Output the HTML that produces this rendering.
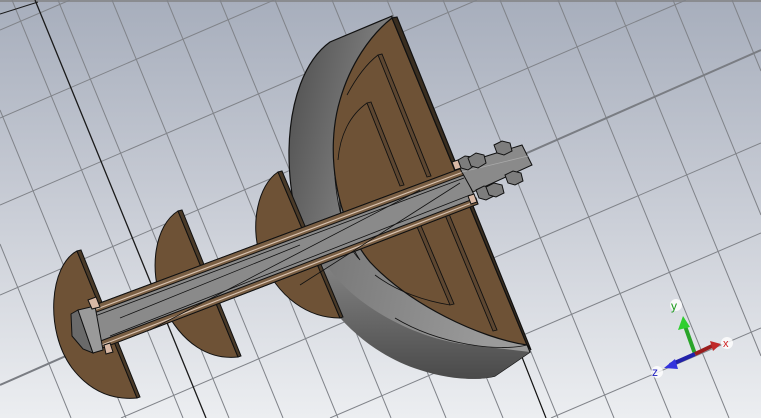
<!DOCTYPE html>
<html><head><meta charset="utf-8"><style>
html,body{margin:0;padding:0;width:761px;height:418px;overflow:hidden;position:relative;}
svg{display:block;position:absolute;left:0;top:0;overflow:hidden}
text{font-family:"Liberation Sans",sans-serif}
</style></head><body>
<svg width="761" height="418" viewBox="0 0 761 418" xmlns="http://www.w3.org/2000/svg">
<defs>
<linearGradient id="bg" x1="0" y1="0" x2="0" y2="1">
<stop offset="0" stop-color="#a7aebc"/><stop offset="0.5" stop-color="#c9cdd6"/><stop offset="1" stop-color="#eceef1"/>
</linearGradient>
<linearGradient id="ring" x1="0" y1="0" x2="1" y2="0.3">
<stop offset="0" stop-color="#4c4c4c"/><stop offset="0.35" stop-color="#7a7a7a"/><stop offset="1" stop-color="#9a9a9a"/>
</linearGradient>
<linearGradient id="ringb" x1="0" y1="0" x2="0" y2="1">
<stop offset="0" stop-color="#8a8a8a"/><stop offset="1" stop-color="#4a4a4a"/>
</linearGradient>
</defs>
<rect width="761" height="418" fill="url(#bg)"/>
<rect width="761" height="2" fill="#8a8c90"/>
<g stroke="#808389" stroke-width="1" fill="none">
<line x1="0" y1="244" x2="71" y2="418"/>
<line x1="0" y1="110" x2="126" y2="418"/>
<line x1="12" y1="0" x2="183" y2="418"/>
<line x1="58" y1="0" x2="229" y2="418"/>
<line x1="112" y1="0" x2="283" y2="418"/>
<line x1="167" y1="0" x2="338" y2="418"/>
<line x1="220" y1="0" x2="391" y2="418"/>
<line x1="275" y1="0" x2="446" y2="418"/>
<line x1="332" y1="0" x2="503" y2="418"/>
<line x1="387" y1="0" x2="558" y2="418"/>
<line x1="443" y1="0" x2="614" y2="418"/>
<line x1="500" y1="0" x2="671" y2="418"/>
<line x1="558" y1="0" x2="729" y2="418"/>
<line x1="615" y1="0" x2="761" y2="356"/>
<line x1="673" y1="0" x2="761" y2="215"/>
<line x1="732" y1="0" x2="761" y2="71"/>
<line x1="0" y1="30" x2="70" y2="0"/>
<line x1="0" y1="118" x2="274" y2="0"/>
<line x1="0" y1="205" x2="477" y2="0"/>
<line x1="0" y1="295" x2="686" y2="0"/>
<line x1="121" y1="418" x2="761" y2="143"/>
<line x1="330" y1="418" x2="761" y2="233"/>
<line x1="551" y1="418" x2="761" y2="328"/>
</g>
<line x1="0" y1="385" x2="761" y2="50" stroke="#7a7d83" stroke-width="2"/>
<line x1="35" y1="0" x2="206" y2="418" stroke="#1a1a1a" stroke-width="1.3"/>
<line x1="0" y1="14" x2="38" y2="2" stroke="#1a1a1a" stroke-width="1"/>
<line x1="520" y1="352" x2="546" y2="418" stroke="#111" stroke-width="1.2"/>

<g stroke="#111" stroke-width="1">
<path d="M77,251 C50,265 44,330 72,368 C92,394 115,400 137,398 Z" fill="#6e5236"/>
<path d="M77,251 L81,250 L140,397 L137,398 Z" fill="#4a3a28"/>
<path d="M178,211 C155,225 148,270 163,305 C182,345 210,360 238,357 Z" fill="#6e5236"/>
<path d="M178,211 L182,210 L241,356 L238,357 Z" fill="#4a3a28"/>
</g>

<g stroke="#111" stroke-width="1.2">
<path d="M392,16 L330,42 C305,60 290,100 289,150 C288,240 330,320 400,360 C430,375 470,382 495,376 L530,352 L392,18 Z" fill="url(#ring)"/>
<path d="M300,250 C320,310 370,355 420,370 C450,380 480,381 495,376 L530,352 L470,345 C420,340 360,310 330,270 Z" fill="url(#ringb)" stroke="none"/>
<path d="M392,18 C365,40 345,80 336,130 C330,180 340,230 360,260 C330,230 325,120 392,18 Z" fill="#8c8c8c" stroke-width="0.8"/>
<path d="M392,18 L527,345 C480,338 410,305 370,262 C335,220 325,150 340,100 C350,65 370,35 392,18 Z" fill="#6e5236"/>
<path d="M392,18 L397,17 L531,350 L527,345 Z" fill="#3a2e20"/>
<path d="M527,345 C500,352 440,345 395,318" fill="none" stroke-width="0.8"/>
</g>
<g stroke="#111" stroke-width="0.9" fill="#5d4630">
<path d="M378,55 L382,54 L431,176 L427,177 Z"/>
<path d="M367,103 L371,102 L404,185 L400,186 Z"/>
<path d="M443,210 L447,209 L497,330 L493,331 Z"/>
<path d="M415,222 L419,221 L454,304 L450,305 Z"/>
</g>
<path d="M367,103 C350,115 340,135 338,160" fill="none" stroke="#111" stroke-width="0.8"/>
<path d="M378,55 C365,65 355,80 347,95" fill="none" stroke="#111" stroke-width="0.8"/>
<path d="M450,305 C420,300 395,290 375,275" fill="none" stroke="#111" stroke-width="0.8"/>

<g stroke="#111" stroke-width="1">
<path d="M278,172 C258,185 250,225 260,255 C278,300 310,318 340,318 Z" fill="#6e5236"/>
<path d="M278,172 L282,171 L343,317 L340,318 Z" fill="#4a3a28"/>
</g>

<g stroke="#111" stroke-width="1">
<path d="M92,306 L462,168 L478,204 L100,349 Z" fill="#8a8a8a"/>
<path d="M92,306 L462,168 L464,175 L94,313 Z" fill="#7a5f44"/>
<path d="M94,310 L463,172" stroke="#d8c2b0" stroke-width="1.2"/>
<path d="M98,342 L476,198 L478,204 L100,349 Z" fill="#7a5f44"/>
<path d="M99,346 L477,201" stroke="#d8c2b0" stroke-width="1.2"/>
<path d="M95,316 L464,178 M110,336 L470,195" stroke-width="0.8"/>
<path d="M150,330 L420,190 M120,318 L300,245 M300,285 L460,183" stroke-width="0.8" fill="none"/>
</g>
<g stroke="#111" stroke-width="1">
<path d="M458,165 L522,145 L532,165 L473,192 Z" fill="#8a8a8a"/>
<path d="M462,172 L528,156" stroke="#aaa" stroke-width="0.8"/>
<path d="M458,160 L465,156 L472,157 L475,165 L468,170 L461,168 Z" fill="#7d7d7d"/>
<path d="M468,158 L476,153 L484,155 L486,163 L478,168 L471,166 Z" fill="#7d7d7d"/>
<path d="M494,145 L502,141 L510,143 L512,151 L504,155 L497,153 Z" fill="#7d7d7d"/>
<path d="M505,175 L513,171 L521,173 L523,181 L515,185 L508,183 Z" fill="#7d7d7d"/>
<path d="M476,190 L484,186 L492,188 L494,196 L486,200 L479,198 Z" fill="#7d7d7d"/>
<path d="M486,187 L494,183 L502,185 L504,193 L496,197 L489,195 Z" fill="#7d7d7d"/>
<path d="M452,162 L458,160 L461,168 L455,170 Z" fill="#d9b9a6"/>
<path d="M468,196 L474,194 L477,202 L471,204 Z" fill="#d9b9a6"/>
</g>
<g stroke="#111" stroke-width="1">
<path d="M71,314 L78,310 L93,353 L83,349 L72,336 Z" fill="#6a6a6a"/>
<path d="M78,310 L95,306 L103,350 L93,353 Z" fill="#9a9a9a"/>
<path d="M88,300 L96,297 L100,307 L92,309 Z" fill="#d9b9a6"/>
<path d="M104,345 L110,343 L113,352 L106,354 Z" fill="#d9b9a6"/>
</g>

<g>
<circle cx="676" cy="305" r="6" fill="#fff" opacity="0.8"/>
<circle cx="727" cy="343" r="6" fill="#fff" opacity="0.8"/>
<circle cx="657" cy="372" r="6" fill="#fff" opacity="0.8"/>
<line x1="695" y1="354" x2="685" y2="326" stroke="#2aa52a" stroke-width="4"/>
<path d="M683,316 L678,330 L690,327 Z" fill="#2fcf2f"/>
<line x1="695" y1="354" x2="670" y2="365" stroke="#2222aa" stroke-width="4"/>
<path d="M664,368 L675,359 L678,369 Z" fill="#3333dd"/>
<line x1="695" y1="354" x2="712" y2="346" stroke="#9a1d1d" stroke-width="4"/>
<path d="M721,344 L710,341 L713,351 Z" fill="#c02828"/>
<text x="671" y="310" font-size="12" fill="#1a9a1a">y</text>
<text x="723" y="347" font-size="11" fill="#d02020">x</text>
<text x="652" y="376" font-size="12" fill="#2020c0">z</text>
</g>
</svg>
</body></html>
